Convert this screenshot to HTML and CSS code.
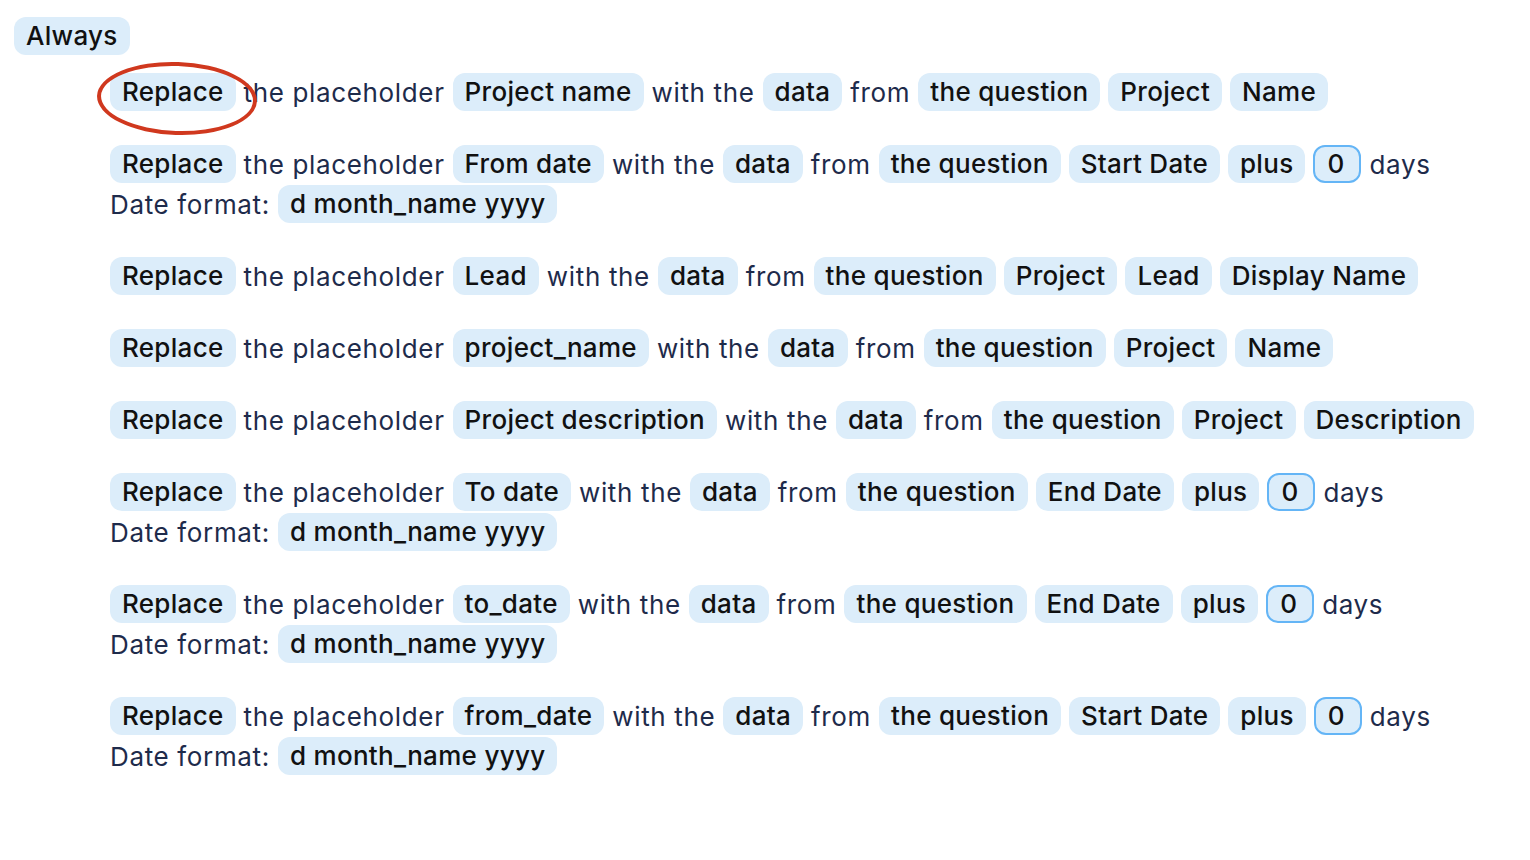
FILE: index.html
```html
<!DOCTYPE html>
<html lang="en">
<head>
  <meta charset="UTF-8">
  <title>Template rules</title>
  <link rel="stylesheet" href="styles.css">
</head>
<body>

<div class="rules">
  <div class="trigger">
    <span class="chip">Always</span>
  </div>

  <div class="rule-list">
    <div class="rule">
      <div class="line">
        <span class="chip marked">Replace</span>
        <span>the placeholder</span>
        <span class="chip">Project name</span>
        <span>with the</span>
        <span class="chip">data</span>
        <span>from</span>
        <span class="chip">the question</span>
        <span class="chip">Project</span>
        <span class="chip">Name</span>
      </div>
    </div>

    <div class="rule">
      <div class="line">
        <span class="chip">Replace</span>
        <span>the placeholder</span>
        <span class="chip">From date</span>
        <span>with the</span>
        <span class="chip">data</span>
        <span>from</span>
        <span class="chip">the question</span>
        <span class="chip">Start Date</span>
        <span class="chip">plus</span>
        <span class="num">0</span>
        <span>days</span>
      </div>
      <div class="line">
        <span>Date format:</span>
        <span class="chip">d month_name yyyy</span>
      </div>
    </div>

    <div class="rule">
      <div class="line">
        <span class="chip">Replace</span>
        <span>the placeholder</span>
        <span class="chip">Lead</span>
        <span>with the</span>
        <span class="chip">data</span>
        <span>from</span>
        <span class="chip">the question</span>
        <span class="chip">Project</span>
        <span class="chip">Lead</span>
        <span class="chip">Display Name</span>
      </div>
    </div>

    <div class="rule">
      <div class="line">
        <span class="chip">Replace</span>
        <span>the placeholder</span>
        <span class="chip">project_name</span>
        <span>with the</span>
        <span class="chip">data</span>
        <span>from</span>
        <span class="chip">the question</span>
        <span class="chip">Project</span>
        <span class="chip">Name</span>
      </div>
    </div>

    <div class="rule">
      <div class="line">
        <span class="chip">Replace</span>
        <span>the placeholder</span>
        <span class="chip">Project description</span>
        <span>with the</span>
        <span class="chip">data</span>
        <span>from</span>
        <span class="chip">the question</span>
        <span class="chip">Project</span>
        <span class="chip">Description</span>
      </div>
    </div>

    <div class="rule">
      <div class="line">
        <span class="chip">Replace</span>
        <span>the placeholder</span>
        <span class="chip">To date</span>
        <span>with the</span>
        <span class="chip">data</span>
        <span>from</span>
        <span class="chip">the question</span>
        <span class="chip">End Date</span>
        <span class="chip">plus</span>
        <span class="num">0</span>
        <span>days</span>
      </div>
      <div class="line">
        <span>Date format:</span>
        <span class="chip">d month_name yyyy</span>
      </div>
    </div>

    <div class="rule">
      <div class="line">
        <span class="chip">Replace</span>
        <span>the placeholder</span>
        <span class="chip">to_date</span>
        <span>with the</span>
        <span class="chip">data</span>
        <span>from</span>
        <span class="chip">the question</span>
        <span class="chip">End Date</span>
        <span class="chip">plus</span>
        <span class="num">0</span>
        <span>days</span>
      </div>
      <div class="line">
        <span>Date format:</span>
        <span class="chip">d month_name yyyy</span>
      </div>
    </div>

    <div class="rule">
      <div class="line">
        <span class="chip">Replace</span>
        <span>the placeholder</span>
        <span class="chip">from_date</span>
        <span>with the</span>
        <span class="chip">data</span>
        <span>from</span>
        <span class="chip">the question</span>
        <span class="chip">Start Date</span>
        <span class="chip">plus</span>
        <span class="num">0</span>
        <span>days</span>
      </div>
      <div class="line">
        <span>Date format:</span>
        <span class="chip">d month_name yyyy</span>
      </div>
    </div>
  </div>
</div>

</body>
</html>
```

FILE: styles.css
```css
* {
  box-sizing: border-box;
}

html, body {
  margin: 0;
  padding: 0;
  background: white;
  font-family: Inter, "Noto Sans", sans-serif;
  font-size: 26px;
  color: #1e2b4b;
}

.rules {
  padding: 16px 14px;
}

.trigger {
  display: flex;
  height: 40px;
  align-items: center;
  margin-bottom: 16px;
}

.rule-list {
  padding-left: 96px;
}

.rule {
  margin-bottom: 32px;
}

.line {
  display: flex;
  align-items: center;
  gap: 8px;
  height: 40px;
  white-space: nowrap;
  letter-spacing: 0.65px;
}

.chip {
  display: inline-block;
  background: #dcedfa;
  color: #111;
  font-weight: 500;
  letter-spacing: 0.3px;
  line-height: 38px;
  padding: 0 12px;
  border-radius: 12px;
}

.num {
  display: inline-block;
  width: 48px;
  line-height: 34px;
  padding-left: 12px;
  background: #dcedfa;
  color: #111;
  font-weight: 500;
  border: 2px solid #64b5f6;
  border-radius: 12px;
}

/* red annotation ring round the first Replace */
.marked {
  position: relative;
}

.marked::after {
  content: "";
  position: absolute;
  left: -13px;
  top: -11px;
  width: 152px;
  height: 65px;
  border: 4px solid #d0381e;
  border-radius: 50%;
  transform: rotate(2deg);
}
```
